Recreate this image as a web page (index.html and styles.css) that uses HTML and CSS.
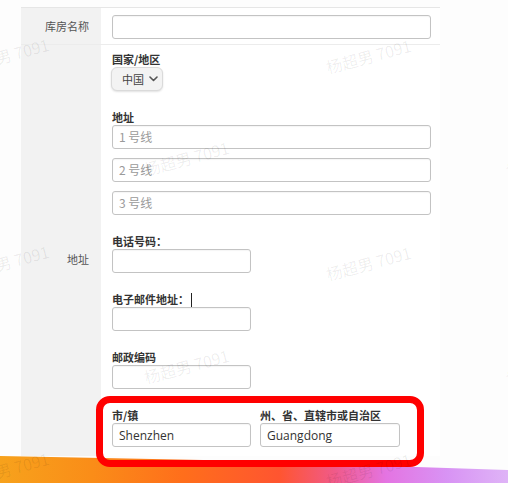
FILE: index.html
```html
<!DOCTYPE html>
<html lang="zh-CN">
<head>
<meta charset="utf-8">
<title>库房</title>
<link rel="stylesheet" href="styles.css">
</head>
<body>
<div class="screen">
  <div class="window">
    <div class="card">
      <div class="row row-name">
        <div class="label-cell">库房名称</div>
        <div class="field-cell name-cell"><input class="input full" type="text"></div>
      </div>
      <div class="row row-address">
        <div class="label-cell">地址</div>
        <div class="field-cell address-cell">
          <div class="group">
            <div class="field-label">国家/地区</div>
            <div class="select">中国<svg class="chev" width="9" height="6" viewBox="0 0 9 6"><path d="M1 1 L4.5 4.5 L8 1" fill="none" stroke="#555" stroke-width="1.6" stroke-linecap="round" stroke-linejoin="round"/></svg></div>
          </div>
          <div class="group spaced">
            <div class="field-label">地址</div>
            <div class="stack">
              <input class="input full" type="text" placeholder="1 号线">
              <input class="input full" type="text" placeholder="2 号线">
              <input class="input full" type="text" placeholder="3 号线">
            </div>
          </div>
          <div class="group spaced">
            <div class="field-label">电话号码：</div>
            <input class="input short" type="text">
          </div>
          <div class="group spaced">
            <div class="field-label">电子邮件地址：<span class="caret"></span></div>
            <input class="input short" type="text">
          </div>
          <div class="group spaced">
            <div class="field-label">邮政编码</div>
            <input class="input short" type="text">
          </div>
          <div class="group spaced pair">
            <div class="pair-col">
              <div class="field-label">市/镇</div>
              <input class="input short" type="text" value="Shenzhen">
            </div>
            <div class="pair-col">
              <div class="field-label">州、省、直辖市或自治区</div>
              <input class="input short" type="text" value="Guangdong">
            </div>
          </div>
        </div>
      </div>
    </div>
  </div>
  <div class="wallpaper"></div>

  <div class="highlight"></div>

  <div class="watermarks">
    <span class="wm wm-1">杨超男 7091</span>
    <span class="wm wm-2">杨超男 7091</span>
    <span class="wm wm-3">杨超男 7091</span>
    <span class="wm wm-4">杨超男 7091</span>
    <span class="wm wm-5">杨超男 7091</span>
    <span class="wm wm-6">杨超男 7091</span>
    <span class="wm wm-7">杨超男 7091</span>
    <span class="wm wm-8">杨超男 7091</span>
    <span class="wm wm-9">杨超男 7091</span>
    <span class="wm wm-10">杨超男 7091</span>
  </div>
</div>
</body>
</html>
```

FILE: styles.css
```css
* { box-sizing: border-box; }

html, body {
  margin: 0;
  padding: 0;
  background: #ffffff;
}

body {
  font-family: "Noto Sans CJK SC", "Noto Sans", sans-serif;
  color: #333;
}

.screen {
  position: relative;
  width: 508px;
  height: 483px;
  overflow: hidden;
  background: #fdfdfd;
}

.window {
  height: 456px;
  overflow: hidden;
  padding-top: 7px;
}

.card {
  margin-left: 21px;
  width: 419px;
  border-top: 1px solid #e6e6e6;
  background: #fff;
}

.row {
  display: flex;
  align-items: stretch;
}

.row-name {
  border-bottom: 1px solid #ececec;
}

.label-cell {
  width: 80px;
  flex: 0 0 80px;
  background: #f2f2f2;
  display: flex;
  align-items: center;
  justify-content: flex-end;
  padding-right: 12px;
  font-size: 11px;
  color: #555;
}

.field-cell {
  flex: 1;
  padding-left: 11px;
}

.name-cell {
  padding-top: 7px;
  padding-bottom: 5px;
}

.address-cell {
  padding-top: 7px;
  padding-bottom: 25px;
}

.group.spaced {
  margin-top: 19px;
}

.field-label {
  font-size: 11px;
  line-height: 15px;
  font-weight: 700;
  color: #333;
  display: flex;
  align-items: center;
}

.caret {
  display: inline-block;
  width: 1px;
  height: 14px;
  background: #222;
  margin-left: 2px;
}

.select {
  margin-left: -1px;
  width: 52px;
  height: 24px;
  border: 1px solid #dadada;
  border-radius: 6px;
  background: #f3f3f3;
  box-shadow: 0 1px 2px rgba(0, 0, 0, 0.12);
  display: flex;
  align-items: center;
  padding-left: 10px;
  gap: 5px;
  font-size: 11px;
  color: #444;
}

.chev { display: block; }

.input {
  display: block;
  height: 24px;
  border: 1px solid #c3c3c3;
  border-radius: 3px;
  padding: 0 6px;
  font-family: "Open Sans", "Noto Sans CJK SC", sans-serif;
  font-size: 12px;
  color: #333;
  background: #fff;
  box-shadow: inset 0 1px 1px rgba(0, 0, 0, 0.04);
  outline: none;
}

.input::placeholder {
  color: #9a9a9a;
  font-family: "Noto Sans CJK SC", sans-serif;
}

.input.full { width: 319px; }
.input.short { width: 139px; }

.stack {
  display: flex;
  flex-direction: column;
  gap: 9px;
}

.pair {
  display: flex;
  gap: 9px;
}

.pair-col .input.short { width: 140px; }
.pair-col:first-child .input.short { width: 139px; }

.wallpaper {
  height: 27px;
  background: linear-gradient(90deg, #f7a21c 0%, #fa8d18 18%, #ff6e1b 36%, #ff5530 55%, #f05a8a 66%, #e474e2 76%, #d893f4 88%, #dfb4f7 100%);
  clip-path: polygon(0 0, 40% 4px, 70% 9px, 100% 14px, 100% 100%, 0 100%);
}

.highlight {
  position: absolute;
  left: 96px;
  top: 396px;
  width: 328px;
  height: 71px;
  border: 7px solid #ff0000;
  border-radius: 14px;
  pointer-events: none;
}

.watermarks {
  position: absolute;
  inset: 0;
  pointer-events: none;
}

.wm {
  position: absolute;
  font-family: "Noto Sans CJK SC", sans-serif;
  font-size: 16px;
  line-height: 20px;
  color: rgba(0, 0, 0, 0.07);
  white-space: nowrap;
  transform: rotate(-15deg);
}

.wm-1 { left: -37px; top: 45px; }
.wm-2 { left: 325px; top: 46px; }
.wm-3 { left: 143px; top: 148px; }
.wm-4 { left: 505px; top: 150px; }
.wm-5 { left: -37px; top: 252px; }
.wm-6 { left: 325px; top: 253px; }
.wm-7 { left: 143px; top: 356px; }
.wm-8 { left: 505px; top: 358px; }
.wm-9 { left: -37px; top: 459px; }
.wm-10 { left: 325px; top: 460px; }
```
